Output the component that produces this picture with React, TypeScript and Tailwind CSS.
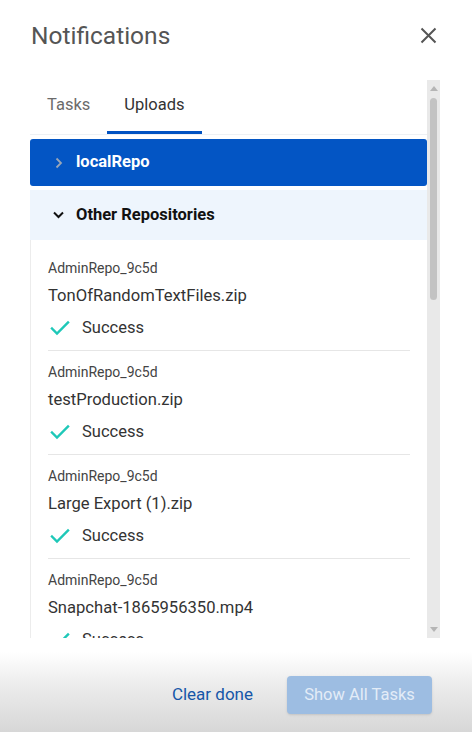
import React from 'react';

const uploads = [
  { repo: 'AdminRepo_9c5d', file: 'TonOfRandomTextFiles.zip' },
  { repo: 'AdminRepo_9c5d', file: 'testProduction.zip' },
  { repo: 'AdminRepo_9c5d', file: 'Large Export (1).zip' },
  { repo: 'AdminRepo_9c5d', file: 'Snapchat-1865956350.mp4' },
];

const CheckIcon = () => (
  <svg width="20" height="16" viewBox="0 0 20 16" fill="none">
    <path d="M2 8.5l5 5L18 2.5" stroke="#1ec8b8" strokeWidth="2.4" strokeLinecap="square" />
  </svg>
);

export default function App() {
  return (
    <div className="w-[472px] h-[732px] bg-white flex flex-col overflow-hidden" style={{ fontFamily: 'Roboto, "Liberation Sans", sans-serif' }}>
      {/* Header */}
      <div className="h-[80px] flex items-start justify-between pl-[31px] pr-[35px] pt-[20px]">
        <h1 className="text-[24.5px] leading-[32px] text-[#555555]">Notifications</h1>
        <button className="mt-[7px] text-[#555555]">
          <svg width="17" height="17" viewBox="0 0 17 17" fill="none">
            <path d="M1.5 1.5l14 14M15.5 1.5l-14 14" stroke="#555555" strokeWidth="2" />
          </svg>
        </button>
      </div>

      {/* Panel */}
      <div className="ml-[30px] w-[410px] h-[558px] flex">
        <div className="w-[397px] h-full overflow-hidden flex flex-col">
          {/* Tabs */}
          <div className="h-[55px] flex items-end border-b border-[#eef1f4] shrink-0">
            <button className="h-[54px] px-[17px] text-[16.5px] text-[#6b6b6b] border-b-[3px] border-transparent">Tasks</button>
            <button className="h-[54px] px-[17px] text-[16.5px] text-[#333333] border-b-[3px] border-[#0052c2]">Uploads</button>
          </div>

          <div className="mt-[4px] h-[47px] shrink-0 rounded-[3px] bg-[#0355c4] flex items-center pl-[25px]">
            <svg width="8" height="12" viewBox="0 0 8 12" fill="none">
              <path d="M1.5 1.5l4.5 4.5-4.5 4.5" stroke="#9aa6b8" strokeWidth="1.8" />
            </svg>
            <span className="ml-[13px] text-[16.5px] font-bold text-white">localRepo</span>
          </div>

          <div className="mt-[4px] h-[50px] shrink-0 bg-[#eef5fd] flex items-center pl-[23px]">
            <svg width="11" height="8" viewBox="0 0 11 8" fill="none">
              <path d="M1 1.5l4.5 4.5L10 1.5" stroke="#111111" strokeWidth="2" />
            </svg>
            <span className="ml-[12px] text-[16.5px] font-bold text-[#111111]">Other Repositories</span>
          </div>

          <div className="border-l border-[#ececec] pt-[7px]">
            {uploads.map((u, i) => (
              <div key={i} className="mx-[17px] pt-[12px] pb-[11px] border-b border-[#e6e6e6]">
                <div className="text-[14px] leading-[18px] text-[#444444]">{u.repo}</div>
                <div className="mt-[9px] text-[16.6px] leading-[20px] text-[#333333]">{u.file}</div>
                <div className="mt-[9px] h-[24px] flex items-center pt-[2px]">
                  <span className="ml-[2px]"><CheckIcon /></span>
                  <span className="ml-[12px] text-[16.5px] text-[#333333]">Success</span>
                </div>
              </div>
            ))}
          </div>
        </div>

        {/* Scrollbar */}
        <div className="w-[13px] h-full bg-[#e9e9e9] flex flex-col items-center">
          <svg className="mt-[6px]" width="8" height="5" viewBox="0 0 8 5"><path d="M4 0L8 5H0z" fill="#b5b5b5" /></svg>
          <div className="mt-[7px] w-[7px] h-[202px] rounded-full bg-[#c3c3c3]" />
          <div className="flex-1" />
          <svg className="mb-[6px]" width="8" height="5" viewBox="0 0 8 5"><path d="M0 0h8L4 5z" fill="#b5b5b5" /></svg>
        </div>
      </div>

      {/* Footer */}
      <div className="flex-1 bg-linear-to-b from-white from-15% via-[#ececec] via-50% to-[#d7d7d7] flex items-start justify-end pt-[38px] pr-[40px]">
        <button className="h-[38px] mr-[34px] text-[17px] text-[#1556a8] flex items-center">Clear done</button>
        <button className="h-[38px] w-[145px] rounded-[4px] bg-[#9dbde2] text-[16.5px] text-[#e3ecf7] shadow-sm">Show All Tasks</button>
      </div>
    </div>
  );
}
